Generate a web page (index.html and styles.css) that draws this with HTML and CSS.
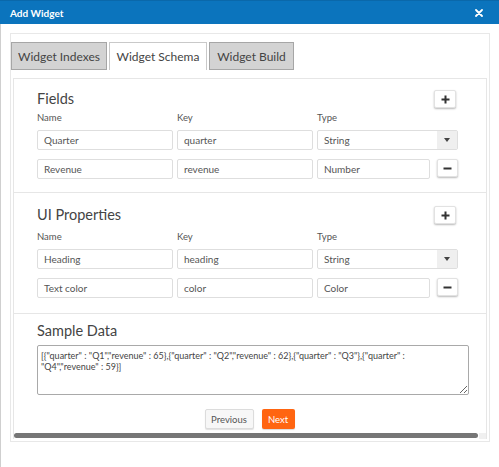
FILE: index.html
```html
<!DOCTYPE html>
<html lang="en">
<head>
<meta charset="utf-8">
<title>Add Widget</title>
<link rel="stylesheet" href="styles.css">
</head>
<body>
<div class="modal">
  <header class="modal-head">
    <span class="title">Add Widget</span>
    <span class="close" aria-label="Close">
      <svg width="8" height="8" viewBox="0 0 8 8"><path d="M1 1L7 7M7 1L1 7" stroke="#fff" stroke-width="1.8" stroke-linecap="round"/></svg>
    </span>
  </header>
  <div class="modal-body">
    <div class="wizard">
      <nav class="tabs">
        <span class="tab tab-1">Widget Indexes</span>
        <span class="tab tab-2 active">Widget Schema</span>
        <span class="tab tab-3">Widget Build</span>
      </nav>
      <div class="panel">
        <section class="sec sec-fields">
          <div class="sec-head">
            <h2>Fields</h2>
            <span class="icon-btn"><svg width="9" height="9" viewBox="0 0 9 9"><path d="M4.5 0.5V8.5M0.5 4.5H8.5" stroke="#333" stroke-width="2"/></svg></span>
          </div>
          <div class="row labels"><span>Name</span><span>Key</span><span class="span2">Type</span></div>
          <div class="row r1">
            <span class="input">Quarter</span>
            <span class="input">quarter</span>
            <span class="select span2"><span class="sel-text">String</span><span class="arrow"></span></span>
          </div>
          <div class="row r2">
            <span class="input">Revenue</span>
            <span class="input">revenue</span>
            <span class="input">Number</span>
            <span class="icon-btn minus"><svg width="9" height="9" viewBox="0 0 9 9"><path d="M0.5 4.5H8.5" stroke="#333" stroke-width="2"/></svg></span>
          </div>
        </section>
        <section class="sec sec-ui">
          <div class="sec-head">
            <h2>UI Properties</h2>
            <span class="icon-btn"><svg width="9" height="9" viewBox="0 0 9 9"><path d="M4.5 0.5V8.5M0.5 4.5H8.5" stroke="#333" stroke-width="2"/></svg></span>
          </div>
          <div class="row labels"><span>Name</span><span>Key</span><span class="span2">Type</span></div>
          <div class="row r1">
            <span class="input">Heading</span>
            <span class="input">heading</span>
            <span class="select span2"><span class="sel-text">String</span><span class="arrow"></span></span>
          </div>
          <div class="row r2">
            <span class="input">Text color</span>
            <span class="input">color</span>
            <span class="input">Color</span>
            <span class="icon-btn minus"><svg width="9" height="9" viewBox="0 0 9 9"><path d="M0.5 4.5H8.5" stroke="#333" stroke-width="2"/></svg></span>
          </div>
        </section>
        <section class="sec sec-sample">
          <h2>Sample Data</h2>
          <textarea class="data">[{"quarter" : "Q1","revenue" : 65},{"quarter" : "Q2","revenue" : 62},{"quarter" : "Q3"},{"quarter" : "Q4","revenue" : 59}]</textarea>
          <div class="actions">
            <span class="btn btn-prev">Previous</span>
            <span class="btn btn-next">Next</span>
          </div>
        </section>
        <div class="hscroll"><div class="track"><div class="thumb"></div></div><div class="corner"></div></div>
      </div>
    </div>
  </div>
</div>
</body>
</html>
```
FILE: styles.css
```css
* { box-sizing: border-box; }
body {
  margin: 0;
  background: #fff;
  font-family: Lato, "Open Sans", sans-serif;
  color: #444;
}
.modal {
  width: 499px;
  height: 467px;
  display: flex;
  flex-direction: column;
}
.modal-head {
  height: 24px;
  flex: none;
  background: #0b74bd;
  border-top: 1px solid #0a68aa;
  display: flex;
  align-items: center;
  justify-content: space-between;
  padding: 0 16px 0 10px;
  color: #fff;
}
.title {
  font-size: 10px;
  font-weight: 700;
}
.close { display: flex; }
.modal-body {
  flex: 1;
  border-left: 1px solid #cfcfcf;
  padding: 9px 9px 0 9px;
}
.wizard {
  border: 1px solid #e8e8e8;
  padding: 8px 0 2px 0;
}
.tabs {
  display: flex;
  gap: 2px;
  height: 28px;
  margin-bottom: 8px;
}
.tab {
  display: flex;
  align-items: center;
  justify-content: center;
  font-size: 12px;
  color: #444;
  background: #d3d3d3;
  border: 1px solid #a6a6a6;
}
.tab-1 { width: 96px; }
.tab-2 { width: 98px; }
.tab-3 { width: 85px; }
.tab.active {
  background: #fff;
  border-color: #c9c9c9;
  border-bottom: none;
}
.panel {
  margin: 0 2px;
  border: 1px solid #e6e6e6;
  border-bottom: none;
}
.sec {
  padding: 11px 27px 13px 23px;
  border-bottom: 1px solid #e6e6e6;
}
.sec-ui { padding-top: 13px; padding-bottom: 15px; }
.sec-ui .labels { margin-top: 7px; }
.sec-head {
  display: flex;
  align-items: center;
  justify-content: space-between;
  height: 18px;
  padding-right: 3px;
}
h2 {
  margin: 0;
  font-size: 14.5px;
  line-height: 18px;
  font-weight: 400;
  color: #444;
}
.icon-btn {
  width: 22px;
  height: 18px;
  display: flex;
  align-items: center;
  justify-content: center;
  background: #fff;
  border: 1px solid #e2e2e2;
  border-radius: 2px;
  box-shadow: 0 1px 2px rgba(0,0,0,0.28);
}
.icon-btn.minus {
  width: 21px;
  justify-self: end;
}
.row {
  display: grid;
  grid-template-columns: 136px 136px 113px 24px;
  column-gap: 4px;
}
.span2 { grid-column: span 2; }
.labels {
  margin-top: 4px;
  font-size: 9.5px;
  line-height: 12px;
  color: #555;
}
.r1 { margin-top: 6px; }
.r2 { margin-top: 9px; }
.input, .select {
  height: 20px;
  display: flex;
  align-items: center;
  border: 1px solid #dedede;
  border-radius: 2px;
  font-size: 10px;
  color: #555;
  background: #fff;
}
.input { padding: 0 6px; }
.sel-text { flex: 1; padding: 0 6px; }
.arrow {
  width: 20px;
  align-self: stretch;
  background: #efefef;
  display: flex;
  align-items: center;
  justify-content: center;
}
.arrow::after {
  content: "";
  border-left: 3px solid transparent;
  border-right: 3px solid transparent;
  border-top: 4px solid #444;
}
.sec-sample {
  padding-top: 8px;
  padding-bottom: 4px;
  border-bottom: none;
}
.data {
  display: block;
  margin-top: 5px;
  width: 432px;
  height: 50px;
  border: 1px solid #a9a9a9;
  border-radius: 2px;
  padding: 4px 14px 4px 3px;
  font-family: Lato, "Open Sans", sans-serif;
  font-size: 9px;
  line-height: 11px;
  color: #444;
  resize: vertical;
  overflow: hidden;
}
.actions {
  margin-top: 14px;
  display: flex;
  justify-content: center;
  gap: 8px;
  padding-left: 3px;
}
.btn {
  height: 20px;
  display: flex;
  align-items: center;
  justify-content: center;
  font-size: 9.5px;
  border-radius: 2px;
}
.btn-prev {
  width: 49px;
  background: #f7f7f7;
  border: 1px solid #dcdcdc;
  color: #555;
  box-shadow: 0 1px 1px rgba(0,0,0,0.12);
}
.btn-next {
  width: 33px;
  background: #ff6511;
  color: #fff;
  box-shadow: 0 1px 1px rgba(0,0,0,0.15);
}
.hscroll {
  display: flex;
  height: 6px;
}
.track { flex: 1; padding-right: 1px; }
.thumb {
  height: 5px;
  background: #767676;
  border-radius: 3px;
}
.corner {
  width: 7px;
  background: #f0f0f0;
}
```
